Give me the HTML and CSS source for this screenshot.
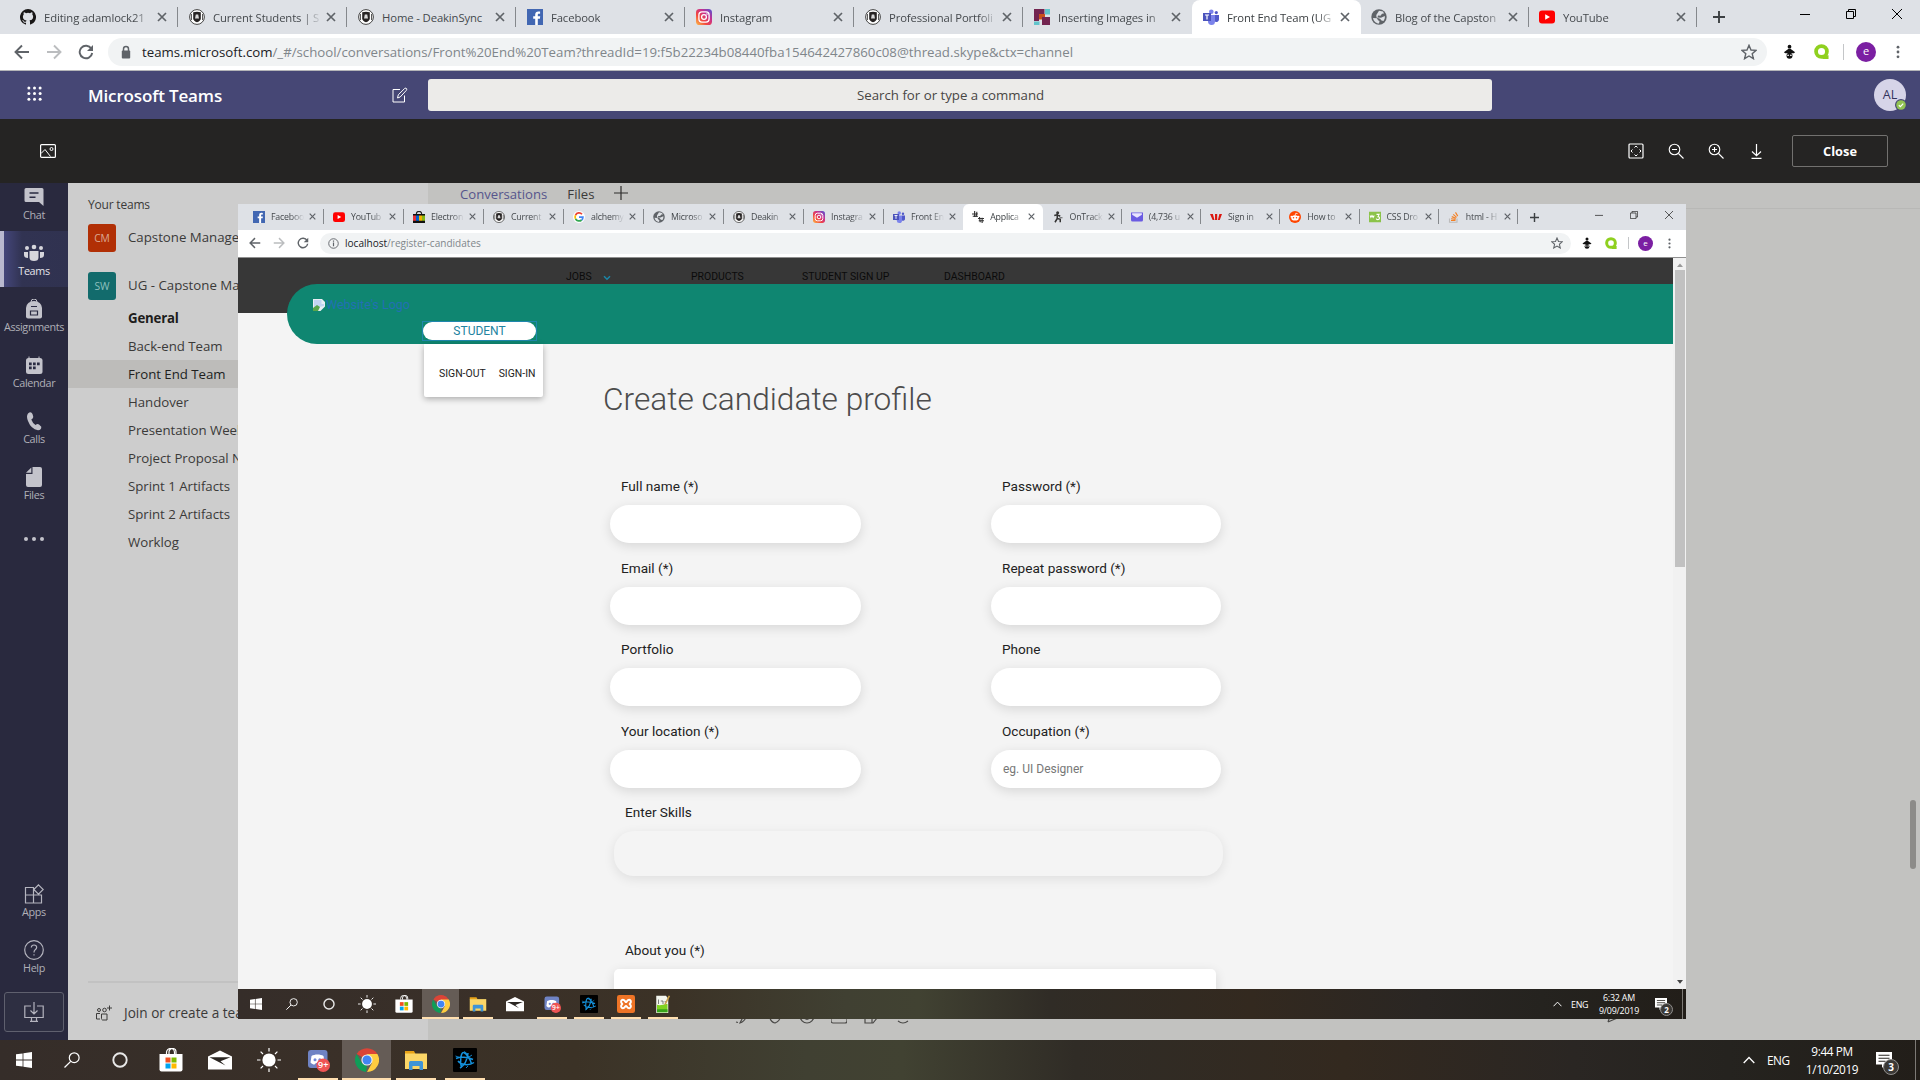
FILE: index.html
```html
<!DOCTYPE html>
<html lang="en">
<head>
<meta charset="utf-8">
<title>Front End Team | Microsoft Teams</title>
<link rel="stylesheet" href="styles.css">
</head>
<body>
<svg class="defs" width="0" height="0">
  <defs>
    <linearGradient id="ig-grad" x1="0" y1="1" x2="1" y2="0"><stop offset="0" stop-color="#fdc04a"/><stop offset=".35" stop-color="#f2463f"/><stop offset=".65" stop-color="#c7308f"/><stop offset="1" stop-color="#4b56d6"/></linearGradient>
    <symbol id="x" viewBox="0 0 10 10"><path d="M1 1l8 8M9 1L1 9" stroke="currentColor" stroke-width="1.7" fill="none"/></symbol>
    <symbol id="github" viewBox="0 0 16 16"><path fill="#191717" d="M8 0a8 8 0 0 0-2.53 15.59c.4.07.55-.17.55-.38v-1.5c-2.22.49-2.69-.94-2.69-.94-.36-.92-.89-1.17-.89-1.17-.73-.5.06-.49.06-.49.8.06 1.23.83 1.23.83.71 1.22 1.87.87 2.33.66.07-.52.28-.87.5-1.07-1.77-.2-3.64-.89-3.64-3.95 0-.87.31-1.59.83-2.15-.09-.2-.36-1.01.07-2.11 0 0 .68-.22 2.2.82a7.6 7.6 0 0 1 4 0c1.53-1.04 2.2-.82 2.2-.82.44 1.1.16 1.91.08 2.11.51.56.82 1.28.82 2.15 0 3.07-1.87 3.75-3.65 3.95.29.25.54.73.54 1.48v2.2c0 .21.15.46.55.38A8 8 0 0 0 8 0z"/></symbol>
    <symbol id="deakin" viewBox="0 0 16 16"><circle cx="8" cy="8" r="7.4" fill="#fff" stroke="#444" stroke-width="1"/><path d="M4.200 3.200q3.800-1 7.600 0v6.300c0 2-1.800 3-3.800 3.800-2-.8-3.800-1.800-3.800-3.800z" fill="#262323"/><path d="M6 9.500l.8-4h2.400l.8 4z" fill="#d8d8d8"/><path d="M2.400 5v6M13.600 5v6" stroke="#333" stroke-width=".9"/></symbol>
    <symbol id="fb" viewBox="0 0 16 16"><path fill="#4267b2" d="M0 0h16v16H0z"/><path fill="#fff" d="M8.200 16V9.800H6.200V7.300h2V5.600c0-2.100 1.300-3.200 3.200-3.200l1.700.1v2.200h-1.200c-.9 0-1.100.5-1.100 1.100v1.500h2.400l-.3 2.500h-2.100V16z"/></symbol>
    <symbol id="insta" viewBox="0 0 16 16"><rect width="16" height="16" rx="3.600" fill="url(#ig-grad)"/><g fill="none" stroke="#fff" stroke-width="1.300"><rect x="2.900" y="2.900" width="10.200" height="10.200" rx="3"/><circle cx="8" cy="8" r="2.400"/></g><circle cx="11" cy="5" r=".8" fill="#fff"/></symbol>
    <symbol id="blocks" viewBox="0 0 16 16"><path fill="#732450" d="M0 0h10.500v5H5v7H0z"/><path fill="#62c4cb" d="M11 0h5v5.500h-5zM0 12.500h5.500V16H0z"/><path fill="#c8501c" d="M5 5h6v5.500H5z"/><path fill="#732450" d="M8 8h8v8H8z"/></symbol>
    <symbol id="teamsico" viewBox="0 0 16 16"><circle cx="8.300" cy="2.700" r="2.300" fill="#7b83eb"/><circle cx="13.300" cy="3.600" r="1.600" fill="#5059c9"/><path fill="#7b83eb" d="M5 6h7v6.500A3.500 3.500 0 0 1 8.500 16 3.600 3.600 0 0 1 5 12.500z"/><path fill="#5059c9" d="M12 6h4v4.500a2.500 2.500 0 0 1-4 2z"/><path fill="#4b53bc" d="M0 4h8v8H0z"/><path d="M2 6h4M4 6v4.500" stroke="#fff" stroke-width="1.200"/></symbol>
    <symbol id="globe" viewBox="0 0 16 16"><circle cx="8" cy="8" r="7.700" fill="#5f6368"/><path fill="#dee1e6" d="M2 9l4 .3 1 2 1.500.7-.5 2.500C5 14.500 2.500 12 2 9zM8 1.700l4 .8 1 2-2 .3-1.500 2L7 6.500 6.500 8.500l3.500.3L13.800 7c.3 2-.3 3.500-1.300 5l-2-.5L9 9.800 5.500 8.500 5.300 6z"/></symbol>
    <symbol id="yt" viewBox="0 0 16 16"><rect y="1.500" width="16" height="13" rx="3" fill="#f00"/><path d="M6.200 5.200v5.600L11 8z" fill="#fff"/></symbol>
    <symbol id="ebag" viewBox="0 0 16 16"><path d="M4.500 5V3.500a3.500 3 0 0 1 7 0V5" fill="none" stroke="#222" stroke-width="1.500"/><path fill="#111" d="M0 4h16v12H0z"/><path fill="#e53238" d="M0 6h4v7H0z"/><path fill="#0064d2" d="M4 6h4v7H4z"/><path fill="#f5af02" d="M8 6h4v7H8z"/><path fill="#86b817" d="M12 6h4v7h-4z"/></symbol>
    <symbol id="google" viewBox="0 0 16 16"><circle cx="8" cy="8" r="8" fill="#fff"/><g fill="none" stroke-width="2.300"><path stroke="#ea4335" d="M12 4.300A5.200 5.200 0 0 0 3.400 5.600"/><path stroke="#fbbc05" d="M3.400 5.600a5.200 5.200 0 0 0 0 4.800"/><path stroke="#34a853" d="M3.400 10.400A5.200 5.200 0 0 0 11.500 12"/><path stroke="#4285f4" d="M11.500 12a5 5 0 0 0 1.700-3.700H8"/></g></symbol>
    <symbol id="apps4" viewBox="0 0 16 16"><g fill="none" stroke="#333" stroke-width="1.500"><path d="M0 4h8M3.500 0v8M6.500 1l-1 7M1 7h7M8 10h8M10 8l1 7M13.500 9v7M9 13h7"/></g></symbol>
    <symbol id="ontrack" viewBox="0 0 16 16"><g fill="none" stroke="#333" stroke-width="2"><path d="M7 4v6M3 6l4-1 4 2M7 10l4 1v4M7 10l-3 5"/></g><circle cx="7.500" cy="2.200" r="2" fill="#333"/><path d="M10 9h4" stroke="#333"/></symbol>
    <symbol id="ymail" viewBox="0 0 16 16"><path fill="#6a5be2" d="M0 2h16v10a2 2 0 0 1-2 2H2a2 2 0 0 1-2-2z"/><path fill="#e9e4ff" d="M1.500 3h13v2L8 9 1.500 5z"/></symbol>
    <symbol id="westpac" viewBox="0 0 16 16"><path fill="#da1710" d="M0 4h3.800l2.200 8H3.500zM6.700 4h2.900v8H6.700zM12.500 4H16l-3 8h-2.500z"/></symbol>
    <symbol id="reddit" viewBox="0 0 16 16"><circle cx="8" cy="8" r="8" fill="#ff4500"/><ellipse cx="8" cy="9.300" rx="5" ry="3.500" fill="#fff"/><circle cx="3.200" cy="7.500" r="1.200" fill="#fff"/><circle cx="12.800" cy="7.500" r="1.200" fill="#fff"/><path d="M8 6l1-3 2.500.5" stroke="#fff" fill="none"/><circle cx="6" cy="9" r="1" fill="#ff4500"/><circle cx="10" cy="9" r="1" fill="#ff4500"/></symbol>
    <symbol id="w3" viewBox="0 0 16 16"><path fill="#8bc34a" d="M0 1h16v14H0z"/><path d="M1.500 6l1 2.500L4 6l1.500 2.500L7 6M10 4.500h3.500L12 7.500c3 0 2.500 4-.3 4-1 0-2-.5-2-1.500" fill="none" stroke="#fff" stroke-width="1.400"/></symbol>
    <symbol id="so" viewBox="0 0 16 16"><path d="M2 10v5h10v-5" fill="none" stroke="#bcbbbb" stroke-width="1.500"/><path d="M4 12.700h6M4.100 10.300l6 .8M5 7.500l5.500 2.200M7 4.500l4.500 4M10 1.800l3 5" stroke="#f48024" stroke-width="1.500"/></symbol>
    <symbol id="back" viewBox="0 0 16 16"><path d="M15 8H2M8 1.500L1.500 8 8 14.500" fill="none" stroke="currentColor" stroke-width="1.900"/></symbol>
    <symbol id="fwd" viewBox="0 0 16 16"><path d="M1 8h13M8 1.500L14.500 8 8 14.500" fill="none" stroke="currentColor" stroke-width="1.900"/></symbol>
    <symbol id="reload" viewBox="0 0 16 16"><path d="M13.300 4.600A6.300 6.300 0 1 0 14.200 9" fill="none" stroke="currentColor" stroke-width="1.900"/><path d="M15 1v6H9z" fill="currentColor"/></symbol>
    <symbol id="star" viewBox="0 0 16 16"><path d="M8 1.300l2 4.700 5 .4-3.800 3.300 1.200 5L8 12l-4.400 2.700 1.200-5L1 6.400 6 6z" fill="none" stroke="#5f6368" stroke-width="1.400"/></symbol>
    <symbol id="bug" viewBox="0 0 16 16"><g fill="#111"><circle cx="8" cy="2.800" r="2"/><path d="M2 8.800L7 5h2l5 3.800-1.500 1H3.500z"/><circle cx="8" cy="12.600" r="3.200"/></g><circle cx="6.500" cy="12" r=".9" fill="#fff"/><circle cx="9.500" cy="12" r=".9" fill="#fff"/></symbol>
    <symbol id="q" viewBox="0 0 16 16"><circle cx="8" cy="8" r="5.800" fill="none" stroke="#8fd01f" stroke-width="4"/><path d="M9 12h6.500v4H9z" fill="#8fd01f"/></symbol>
    <symbol id="dots" viewBox="0 0 4 16"><g fill="#5f6368"><circle cx="2" cy="2.500" r="1.600"/><circle cx="2" cy="8" r="1.600"/><circle cx="2" cy="13.500" r="1.600"/></g></symbol>
    <symbol id="plus" viewBox="0 0 12 12"><path d="M6 0v12M0 6h12" stroke="currentColor" stroke-width="1.900"/></symbol>
    <symbol id="wmin" viewBox="0 0 10 10"><path d="M0 5.500h10" stroke="currentColor"/></symbol>
    <symbol id="wmax" viewBox="0 0 10 10"><path d="M.5 2.500h7v7h-7zM2.500 2.500v-2h7v7h-2" fill="none" stroke="currentColor"/></symbol>
    <symbol id="wx" viewBox="0 0 10 10"><path d="M0 0l10 10M10 0L0 10" stroke="currentColor"/></symbol>
    <symbol id="win" viewBox="0 0 16 16"><path fill="#fff" d="M0 2.300l6.600-.9v6.200H0zM7.400 1.300L16 0v7.600H7.400zM0 8.400h6.600v6.200L0 13.700zM7.400 8.400H16V16l-8.600-1.200z"/></symbol>
    <symbol id="search" viewBox="0 0 16 16"><circle cx="10.200" cy="5.700" r="4.900" fill="none" stroke="#fff" stroke-width="1.200"/><path d="M6.700 9.400L.5 15.500" stroke="#fff" stroke-width="1.300"/></symbol>
    <symbol id="cortana" viewBox="0 0 16 16"><circle cx="8" cy="8" r="6.700" fill="none" stroke="#e8e8e8" stroke-width="1.900"/></symbol>
    <symbol id="store" viewBox="0 0 24 24"><path d="M7.500 6V4.500a4 4 0 0 1 8 0V6M10 6V4a3.500 3.500 0 0 1 7 0v2" fill="none" stroke="#fff" stroke-width="1.200"/><path fill="#fff" d="M.5 6h23v15.500a2 2 0 0 1-2 2h-19a2 2 0 0 1-2-2z"/><path fill="#f25022" d="M6.500 9.500h5v5h-5z"/><path fill="#7fba00" d="M12.500 9.500h5v5h-5z"/><path fill="#00a4ef" d="M6.500 15.500h5v5h-5z"/><path fill="#ffb900" d="M12.500 15.500h5v5h-5z"/></symbol>
    <symbol id="mail" viewBox="0 0 24 20"><path fill="#fff" d="M0 6.500L12 .5l12 6V19.500H0z"/><path fill="#2b2622" d="M1.500 7.200L22.500 7.200 12.500 11.200 17.500 15.500z"/></symbol>
    <symbol id="sun" viewBox="0 0 24 24"><circle cx="12" cy="12" r="6.600" fill="#fff"/><path d="M12 0v3.500M12 20.500V24M0 12h3.500M20.500 12H24M3.600 3.600l2.400 2.400M18 18l2.400 2.400M3.600 20.400L6 18M18 6l2.400-2.400" stroke="#fff" stroke-width="1.200"/></symbol>
    <symbol id="discord" viewBox="0 0 24 24"><rect x="2" y="2" width="19.500" height="18" rx="3" fill="#6f83c4"/><path d="M5.500 8c3-2 9-2 12 0l1 6.500c-1.500 1.500-2.500 2-4 2L13 15h-3l-1.500 1.500c-1.500 0-2.500-.5-4-2z" fill="#fff"/><circle cx="9" cy="11.800" r="1.500" fill="#7289da"/><circle cx="13.800" cy="11.800" r="1.500" fill="#7289da"/><circle cx="17.200" cy="17.200" r="6.800" fill="#ee5454"/><text x="17.200" y="20.300" text-anchor="middle" font-size="9" font-weight="600" fill="#fff">9+</text></symbol>
    <symbol id="chrome" viewBox="0 0 24 24"><path fill="#db4437" d="M12 12L1.700 6A12 12 0 0 1 22.300 6z"/><path fill="#ffcd40" d="M12 6h10.400A12 12 0 0 1 12 24l5-9z"/><path fill="#0f9d58" d="M1.600 6l5.200 9L12 18l-1 6A12 12 0 0 1 1.600 6z"/><circle cx="12" cy="12" r="5.600" fill="#f1f1f1"/><circle cx="12" cy="12" r="4.500" fill="#4285f4"/></symbol>
    <symbol id="explorer" viewBox="0 0 24 20"><path fill="#e8a317" d="M1 1h9l1.500 3H1z"/><path fill="#fbd667" d="M1 3.500h22V19H1z"/><path fill="#3f94d6" d="M5 12.500a1.500 1.500 0 0 1 1.500-1.500h11a1.500 1.500 0 0 1 1.500 1.500V20h-3.500v-4h-7v4H5z"/></symbol>
    <symbol id="bnet" viewBox="0 0 24 24"><rect width="24" height="24" rx="1" fill="#000"/><g fill="none" stroke="#1491dc" stroke-width="1.500"><path d="M8.500 20C6.500 14 8 4 10.500 4.500c3 .5 7 7 8 11.500M5 13c3 4 11 5 16 1.500M3 10.500c4-2 12-1.500 17 1M15 5c-.5 5-3 12-8 15"/><path d="M11 3.500q3 1 4 4M2.500 8l4 1.500M13 20l2-2M16 9l3-2" stroke-width=".9"/></g></symbol>
    <symbol id="xampp" viewBox="0 0 24 24"><rect x="0" y="0" width="24" height="24" rx="3" fill="#ee7426"/><path d="M7 6.500c3-1 4 3 5 3s2-4 5-3c3 2 1 4 0 5.500 1 1.500 3 3.500 0 5.500-3 1-4-3-5-3s-2 4-5 3c-3-2-1-4 0-5.500-1-1.500-3-3.500 0-5.500z" fill="none" stroke="#fff" stroke-width="2.600"/></symbol>
    <symbol id="npp" viewBox="0 0 24 24"><path fill="#f3f6ef" d="M3 1h13l3 4v19H3z"/><path fill="#7ed321" d="M4 13c6 2 9-2 14-1v11H4z"/><path fill="#37a41a" d="M4 19h14v4H4z"/><path d="M6 6v6M9 8h3v4M14 9h2" stroke="#555" stroke-width="1" fill="none"/><path d="M20.500 1l-6 12" stroke="#c9a14a" stroke-width="2.200"/></symbol>
    <symbol id="chev" viewBox="0 0 12 8"><path d="M.7 7L6 1.500 11.300 7" fill="none" stroke="#fff" stroke-width="1.300"/></symbol>
    <symbol id="note" viewBox="0 0 16 16"><path fill="#fff" d="M0 0h16v12.500H9L6 16v-3.500H0z"/><path d="M2.500 3.300h11M2.500 6.300h11M2.500 9.300h7" stroke="#2a2723" stroke-width="1.100"/></symbol>
  </defs>
</svg>

<div class="screen">
  <div class="tabstrip">
    <div class="tab"><svg class="fav"><use href="#github"/></svg><span class="tt">Editing adamlock21</span><svg class="tx"><use href="#x"/></svg></div>
    <div class="tab"><svg class="fav"><use href="#deakin"/></svg><span class="tt">Current Students | S</span><svg class="tx"><use href="#x"/></svg></div>
    <div class="tab"><svg class="fav"><use href="#deakin"/></svg><span class="tt plain">Home - DeakinSync</span><svg class="tx"><use href="#x"/></svg></div>
    <div class="tab"><svg class="fav"><use href="#fb"/></svg><span class="tt">Facebook</span><svg class="tx"><use href="#x"/></svg></div>
    <div class="tab"><svg class="fav"><use href="#insta"/></svg><span class="tt">Instagram</span><svg class="tx"><use href="#x"/></svg></div>
    <div class="tab"><svg class="fav"><use href="#deakin"/></svg><span class="tt">Professional Portfoli</span><svg class="tx"><use href="#x"/></svg></div>
    <div class="tab nosep"><svg class="fav"><use href="#blocks"/></svg><span class="tt">Inserting Images in</span><svg class="tx"><use href="#x"/></svg></div>
    <div class="tab active nosep"><svg class="fav"><use href="#teamsico"/></svg><span class="tt">Front End Team (UG</span><svg class="tx"><use href="#x"/></svg></div>
    <div class="tab n"><svg class="fav"><use href="#globe"/></svg><span class="tt">Blog of the Capston</span><svg class="tx"><use href="#x"/></svg></div>
    <div class="tab n"><svg class="fav"><use href="#yt"/></svg><span class="tt">YouTube</span><svg class="tx"><use href="#x"/></svg></div>
    <svg class="newtab"><use href="#plus"/></svg>
    <div class="winctl"><svg><use href="#wmin"/></svg><svg><use href="#wmax"/></svg><svg><use href="#wx"/></svg></div>
  </div>
  <div class="toolbar">
    <svg class="nav"><use href="#back"/></svg><svg class="nav off"><use href="#fwd"/></svg><svg class="nav"><use href="#reload"/></svg>
    <div class="omni">
      <svg class="lock" viewBox="0 0 10 14"><path d="M2.500 6V4a2.500 2.500 0 0 1 5 0v2" fill="none" stroke="#5f6368" stroke-width="1.500"/><rect x=".8" y="5.500" width="8.400" height="8" rx="1" fill="#5f6368"/></svg>
      <span class="url"><b>teams.microsoft.com</b>/_#/school/conversations/Front%20End%20Team?threadId=19:f5b22234b08440fba154642427860c08@thread.skype&amp;ctx=channel</span>
      <svg class="star"><use href="#star"/></svg>
    </div>
    <div class="ext"><svg><use href="#bug"/></svg><svg class="q"><use href="#q"/></svg><i></i><span class="prof">e</span><svg class="kebab"><use href="#dots"/></svg></div>
  </div>

  <div class="teamsbar">
    <svg class="waffle" viewBox="0 0 16 16" fill="#fff"><circle cx="2" cy="2" r="1.600"/><circle cx="8" cy="2" r="1.600"/><circle cx="14" cy="2" r="1.600"/><circle cx="2" cy="8" r="1.600"/><circle cx="8" cy="8" r="1.600"/><circle cx="14" cy="8" r="1.600"/><circle cx="2" cy="14" r="1.600"/><circle cx="8" cy="14" r="1.600"/><circle cx="14" cy="14" r="1.600"/></svg>
    <span class="brand">Microsoft Teams</span>
    <svg class="compose" viewBox="0 0 16 16" fill="none" stroke="#fff"><path d="M8 2.500H1v12.500h11.500V8.500M5.500 11l.8-3.200 6.500-6.500q1.300-.6 2 .6 0 1-.5 1.500L8.200 10z"/></svg>
    <div class="tsearch">Search for or type a command</div>
    <div class="avatar">AL<svg viewBox="0 0 12 12"><circle cx="6" cy="6" r="6" fill="#464775"/><circle cx="6" cy="6" r="4.800" fill="#92c353"/><path d="M3.800 6.200l1.600 1.500 2.800-3" stroke="#fff" fill="none" stroke-width="1.200"/></svg></div>
  </div>

  <div class="viewerbar">
    <svg class="pic" viewBox="0 0 16 14" fill="none" stroke="#fff"><rect x=".6" y=".6" width="14.800" height="12.800" rx="1" stroke-width="1.200"/><path d="M1 9.500l4-4 5.500 7"/><circle cx="11.500" cy="5" r="1.500"/></svg>
    <div class="vtools">
      <svg viewBox="0 0 16 16" fill="none" stroke="#fff"><rect x="1" y="1" width="14" height="14" rx="1" stroke-width="1.200"/><path d="M6.500 4.500L8 3l1.500 1.500M6.500 11.500L8 13l1.500-1.500M4.500 6.500L3 8l1.500 1.500M11.500 6.500L13 8l-1.500 1.500"/></svg>
      <svg viewBox="0 0 16 16" fill="none" stroke="#fff" stroke-width="1.100"><circle cx="6.500" cy="6.500" r="5.300"/><path d="M10.500 10.500l5 5M4 6.500h5"/></svg>
      <svg viewBox="0 0 16 16" fill="none" stroke="#fff" stroke-width="1.100"><circle cx="6.500" cy="6.500" r="5.300"/><path d="M10.500 10.500l5 5M4 6.500h5M6.500 4v5"/></svg>
      <svg viewBox="0 0 16 16" fill="none" stroke="#fff" stroke-width="1.200"><path d="M8.500 1v11.500M4 8.500l4.500 4.200L13 8.500M3.500 15.400h10"/></svg>
      <button class="close">Close</button>
    </div>
  </div>

  <div class="body">
    <div class="rail">
      <div class="ritem"><svg viewBox="0 0 20 20" fill="#c3c3cb"><path d="M2 1h16a1.500 1.500 0 0 1 1.500 1.500V19L15 15H2A1.500 1.500 0 0 1 .5 13.500v-11A1.500 1.500 0 0 1 2 1z"/><path d="M5.500 6h9M5.500 10.300h6" stroke="#2a2b42" stroke-width="1.400"/></svg>Chat</div>
      <div class="ritem on"><svg viewBox="0 0 20 20" fill="#d6d6dc"><circle cx="10" cy="4" r="2.300"/><circle cx="3" cy="5" r="2"/><circle cx="17" cy="5" r="2"/><path d="M5.500 8h9v6.500a4.500 3.500 0 0 1-9 0zM0 9h4v6Q0 15 0 12zM16 9h4v3q0 3-4 3z"/></svg>Teams</div>
      <div class="ritem"><svg viewBox="0 0 20 20" fill="#c3c3cb"><path d="M7 3a3 3 0 0 1 6 0" fill="none" stroke="#c3c3cb"/><path d="M2 9a8 7 0 0 1 16 0v8.500a2 2 0 0 1-2 2H4a2 2 0 0 1-2-2z"/><path d="M7 7.500h6M6.500 12h7v4h-7z" fill="none" stroke="#2a2b42" stroke-width="1.200"/></svg>Assignments</div>
      <div class="ritem"><svg viewBox="0 0 20 20" fill="#c3c3cb"><path d="M5 1.500v3M15 1.500v3" stroke="#c3c3cb"/><rect x="2" y="3" width="16.500" height="16" rx="2.500"/><path fill="#2a2b42" d="M5 7.500h2.700v2.700H5zM9 7.500h2.700v2.700H9zM13 7.500h2.700v2.700H13zM5 11.500h2.700v2.700H5zM9 11.500h2.700v2.700H9z"/></svg>Calendar</div>
      <div class="ritem"><svg viewBox="0 0 20 20" fill="#c3c3cb"><path d="M4 2.500Q7 0 8.500 3l.8 3Q9 7.500 7.300 8.500 8.500 12 11.500 14q2-1.500 3.500-.5l2.300 2.200Q17.500 19 14 19.300 7 18 4 10 2 5 4 2.500z"/></svg>Calls</div>
      <div class="ritem"><svg viewBox="0 0 20 20" fill="#c3c3cb"><path d="M8.500 0H16a2 2 0 0 1 2 2v16a2 2 0 0 1-2 2H4a2 2 0 0 1-2-2V7h6.500z"/><path d="M7.300.5v5.300H2z"/></svg>Files</div>
      <svg class="more" viewBox="0 0 20 4" fill="#c3c3cb"><circle cx="2" cy="2" r="2"/><circle cx="10" cy="2" r="2"/><circle cx="18" cy="2" r="2"/></svg>
      <div class="rbottom">
        <div class="ritem"><svg viewBox="0 0 20 20" fill="none" stroke="#b4b4be" stroke-width="1.200"><path d="M10 3.500H1.500v15.500h16V10.500M1.500 11h16M9.500 3.500V19M14.500.8L19.200 5.500 14.500 10.200 9.800 5.500z"/></svg>Apps</div>
        <div class="ritem"><svg viewBox="0 0 20 20" fill="none" stroke="#b4b4be" stroke-width="1.200"><circle cx="10" cy="10" r="9.300"/><path d="M7.300 7.500Q7.500 5 10 5t2.700 2.300Q12.700 8.700 11 9.900 10 10.800 10 12.500M10 14.300v1.300"/></svg>Help</div>
        <div class="dlbox"><svg viewBox="0 0 20 20" fill="none" stroke="#b4b4be" stroke-width="1.200"><path d="M7 4H.8v11.500h18.400V4H13M10 0v11.500M6.500 8.500L10 12l3.500-3.500M7.500 15.500V19M12.500 15.500V19M6 19.300h8"/></svg></div>
      </div>
    </div>

    <div class="teams">
      <div class="th">Your teams</div>
      <div class="team"><span class="tile cm">CM</span>Capstone Management</div>
      <div class="team"><span class="tile sw">SW</span>UG - Capstone Management</div>
      <div class="ch bold">General</div>
      <div class="ch">Back-end Team</div>
      <div class="ch sel">Front End Team</div>
      <div class="ch">Handover</div>
      <div class="ch">Presentation Week</div>
      <div class="ch">Project Proposal Notes</div>
      <div class="ch">Sprint 1 Artifacts</div>
      <div class="ch">Sprint 2 Artifacts</div>
      <div class="ch">Worklog</div>
      <div class="join"><svg viewBox="0 0 16 16" fill="none" stroke="#3d3c3b"><circle cx="3" cy="5" r="1.500"/><circle cx="8.500" cy="5" r="1.800"/><path d="M4 8.500H.5v5.500H4M5.500 9h5.500v6H6.500q-1-.5-1-1.500zM13.500.5v5M11 3h5"/></svg>Join or create a team</div>
    </div>

    <div class="main">
      <div class="mtabs"><span class="cur">Conversations</span><span>Files</span><svg viewBox="0 0 14 14"><path d="M7 0v14M0 7h14" stroke="#2d2c2b" stroke-width="1.200"/></svg></div>
      <div class="composer">
        <svg viewBox="0 0 16 16"><path d="M1 14l2 .5M5 15q5-1 9-12L8 9z"/></svg><svg viewBox="0 0 16 16"><path d="M3 5v5q1 4 5 5 5-2 5-6V4"/></svg><svg viewBox="0 0 16 16"><circle cx="8" cy="8" r="7"/><path d="M4 9q4 5 8 0z"/></svg><svg viewBox="0 0 16 16"><rect x="0" y="3" width="16" height="12" rx="2"/></svg><svg viewBox="0 0 16 16"><path d="M2 3v12h8l4-5V3M9 15v-5h5"/></svg><svg viewBox="0 0 16 16"><path d="M0 9h16M3 13q5 4 10 0"/></svg>
        <svg class="send" viewBox="0 0 16 16"><path d="M1 14L15 8M1 14L3 8"/></svg>
      </div>
      <div class="mscroll"></div>
    </div>
  </div>

  <div class="taskbar">
    <div class="tk"><svg><use href="#win"/></svg></div>
    <div class="tk"><svg><use href="#search"/></svg></div>
    <div class="tk c"><svg><use href="#cortana"/></svg></div>
    <div class="tk w big"><svg><use href="#store"/></svg></div>
    <div class="tk w big"><svg><use href="#mail"/></svg></div>
    <div class="tk w big"><svg><use href="#sun"/></svg></div>
    <div class="tk w big run"><svg><use href="#discord"/></svg></div>
    <div class="tk w big run hot"><svg><use href="#chrome"/></svg></div>
    <div class="tk w big run"><svg><use href="#explorer"/></svg></div>
    <div class="tk w big run"><svg><use href="#bnet"/></svg></div>
    <div class="tray"><svg class="chev"><use href="#chev"/></svg><span class="eng">ENG</span><span class="clock">9:44 PM<br>1/10/2019</span><span class="notes"><svg><use href="#note"/></svg><em>3</em></span></div>
  </div>

  <div class="shot">
    <div class="tabstrip">
      <div class="tab"><svg class="fav"><use href="#fb"/></svg><span class="tt">Faceboo</span><svg class="tx"><use href="#x"/></svg></div>
      <div class="tab"><svg class="fav"><use href="#yt"/></svg><span class="tt">YouTub</span><svg class="tx"><use href="#x"/></svg></div>
      <div class="tab"><svg class="fav"><use href="#ebag"/></svg><span class="tt">Electron</span><svg class="tx"><use href="#x"/></svg></div>
      <div class="tab"><svg class="fav"><use href="#deakin"/></svg><span class="tt">Current</span><svg class="tx"><use href="#x"/></svg></div>
      <div class="tab"><svg class="fav"><use href="#google"/></svg><span class="tt">alchemy</span><svg class="tx"><use href="#x"/></svg></div>
      <div class="tab"><svg class="fav"><use href="#globe"/></svg><span class="tt">Microso</span><svg class="tx"><use href="#x"/></svg></div>
      <div class="tab"><svg class="fav"><use href="#deakin"/></svg><span class="tt">Deakin</span><svg class="tx"><use href="#x"/></svg></div>
      <div class="tab"><svg class="fav"><use href="#insta"/></svg><span class="tt">Instagra</span><svg class="tx"><use href="#x"/></svg></div>
      <div class="tab s nosep"><svg class="fav"><use href="#teamsico"/></svg><span class="tt">Front En</span><svg class="tx"><use href="#x"/></svg></div>
      <div class="tab s active nosep"><svg class="fav"><use href="#apps4"/></svg><span class="tt">Applica</span><svg class="tx"><use href="#x"/></svg></div>
      <div class="tab s"><svg class="fav"><use href="#ontrack"/></svg><span class="tt">OnTrack</span><svg class="tx"><use href="#x"/></svg></div>
      <div class="tab s"><svg class="fav"><use href="#ymail"/></svg><span class="tt">(4,736 u</span><svg class="tx"><use href="#x"/></svg></div>
      <div class="tab s"><svg class="fav"><use href="#westpac"/></svg><span class="tt">Sign in</span><svg class="tx"><use href="#x"/></svg></div>
      <div class="tab s"><svg class="fav"><use href="#reddit"/></svg><span class="tt">How to</span><svg class="tx"><use href="#x"/></svg></div>
      <div class="tab s"><svg class="fav"><use href="#w3"/></svg><span class="tt">CSS Dro</span><svg class="tx"><use href="#x"/></svg></div>
      <div class="tab s"><svg class="fav"><use href="#so"/></svg><span class="tt">html - H</span><svg class="tx"><use href="#x"/></svg></div>
      <svg class="newtab"><use href="#plus"/></svg>
      <div class="winctl"><svg><use href="#wmin"/></svg><svg><use href="#wmax"/></svg><svg><use href="#wx"/></svg></div>
    </div>
    <div class="toolbar">
      <svg class="nav"><use href="#back"/></svg><svg class="nav off"><use href="#fwd"/></svg><svg class="nav"><use href="#reload"/></svg>
      <div class="omni">
        <svg class="lock" viewBox="0 0 12 12"><circle cx="6" cy="6" r="5.200" fill="none" stroke="#5f6368"/><path d="M6 5v4M6 2.800v1.300" stroke="#5f6368" stroke-width="1.300"/></svg>
        <span class="url"><b>localhost</b>/register-candidates</span>
        <svg class="star"><use href="#star"/></svg>
      </div>
      <div class="ext"><svg><use href="#bug"/></svg><svg class="q"><use href="#q"/></svg><i></i><span class="prof">e</span><svg class="kebab"><use href="#dots"/></svg></div>
    </div>

    <div class="view">
      <div class="page">
        <div class="sitenav"><span class="jobs">JOBS</span><svg viewBox="0 0 8 6"><path d="M1 1.300L4 4.300 7 1.300" stroke="#1b86a8" stroke-width="1.500" fill="none"/></svg><span class="prod">PRODUCTS</span><span class="sign">STUDENT SIGN UP</span><span>DASHBOARD</span></div>
        <div class="hero">
          <svg class="broken" viewBox="0 0 12 12"><path d="M0 0h9l3 3v9H0z" fill="#e9eef5"/><path d="M1 1h7.500v4L11 5v2L1 9z" fill="#c2d5f2"/><path d="M0 12V9l4-3 3 2-2 4z" fill="#57a64a"/><path d="M12 7.500L7.500 12H12z" fill="#0f8671"/></svg><span class="logo">Website's Logo</span>
        </div>
        <div class="drop"><div class="pillbox"><div class="pill">STUDENT</div></div><div class="menu"><span>SIGN-OUT</span><span>SIGN-IN</span></div></div>
        <div class="form">
          <h1>Create candidate profile</h1>
          <div class="grid">
            <label>Full name (*)<i></i></label><label>Password (*)<i></i></label>
            <label>Email (*)<i></i></label><label>Repeat password (*)<i></i></label>
            <label>Portfolio<i></i></label><label>Phone<i></i></label>
            <label>Your location (*)<i></i></label><label>Occupation (*)<i>eg. UI Designer</i></label>
          </div>
          <label class="wide">Enter Skills<i class="skills"></i></label>
          <label class="wide about">About you (*)<i class="area"></i></label>
        </div>
      </div>
      <div class="sbar"><svg viewBox="0 0 6 4"><path d="M0 4l3-3.500L6 4z" fill="#999"/></svg><div class="thumb"></div><svg class="dn" viewBox="0 0 6 4"><path d="M0 0h6L3 3.800z" fill="#444"/></svg></div>
    </div>

    <div class="taskbar">
      <div class="tk"><svg><use href="#win"/></svg></div>
      <div class="tk"><svg><use href="#search"/></svg></div>
      <div class="tk c"><svg><use href="#cortana"/></svg></div>
      <div class="tk w big"><svg><use href="#sun"/></svg></div>
      <div class="tk w big"><svg><use href="#store"/></svg></div>
      <div class="tk w big run hot"><svg><use href="#chrome"/></svg></div>
      <div class="tk w big run"><svg><use href="#explorer"/></svg></div>
      <div class="tk w big"><svg><use href="#mail"/></svg></div>
      <div class="tk w big run"><svg><use href="#discord"/></svg></div>
      <div class="tk w big run"><svg><use href="#bnet"/></svg></div>
      <div class="tk w big run"><svg><use href="#xampp"/></svg></div>
      <div class="tk w big run"><svg><use href="#npp"/></svg></div>
      <div class="tray"><svg class="chev"><use href="#chev"/></svg><span class="eng">ENG</span><span class="clock">6:32 AM<br>9/09/2019</span><span class="notes"><svg><use href="#note"/></svg><em>2</em></span></div>
    </div>
  </div>
</div>
</body>
</html>
```
FILE: styles.css
```css
* { box-sizing: border-box; }
body { margin: 0; overflow: hidden; font-family: "Open Sans", "Noto Sans", sans-serif; }
.defs { position: absolute; }
svg { flex: none; display: block; }
.screen { position: relative; width: 1920px; height: 1080px; display: flex; flex-direction: column; overflow: hidden; }

/* browser chrome */
.tabstrip { display: flex; height: 34px; padding-left: 9px; background: #dee1e6; flex: none; }
.tab { width: 169px; display: flex; align-items: center; padding-left: 11px; color: #45494d; font-size: 11.300px; position: relative; flex: none; }
.tab.n { width: 168px; padding-left: 10px; }
.tab::after { content: ""; width: 1px; height: 20px; background: #85888c; position: absolute; right: 0; }
.tab.nosep::after { display: none; }
.tab.active { background: #fff; border-radius: 8px 8px 0 0; color: #3c4043; }
.fav { width: 16px; height: 16px; }
.tt { width: 112px; margin-left: 8px; margin-right: 1px; letter-spacing: -.12px; white-space: nowrap; -webkit-mask-image: linear-gradient(90deg, #000 80%, transparent 97%); mask-image: linear-gradient(90deg, #000 80%, transparent 97%); }
.tt.plain { -webkit-mask-image: none; mask-image: none; }
.tx { width: 10px; height: 10px; color: #5f6368; }
.newtab { width: 12px; height: 12px; margin: 11px 0 0 16px; color: #3c4043; }
.winctl { display: flex; gap: 36px; margin: 9px 18px 0 auto; color: #000; }
.winctl svg { width: 10px; height: 10px; }
.toolbar { height: 37px; display: flex; align-items: center; padding: 0 20px 1px 14px; background: #fff; border-bottom: 1px solid #b4b5b8; flex: none; }
.nav { width: 16px; height: 16px; margin-right: 16px; color: #5f6368; }
.nav.off { color: #bbbdbf; }
.omni { width: 1659px; height: 28px; display: flex; align-items: center; border-radius: 14px; background: #f1f3f4; margin-left: -2px; padding: 0 10px 0 13px; }
.lock { width: 10px; height: 14px; }
.url { margin-left: 11px; font-size: 13.260px; color: #80868b; white-space: nowrap; }
.url b { font-weight: 400; color: #202124; }
.star { width: 16px; height: 16px; margin-left: auto; }
.ext { display: flex; align-items: center; margin-left: auto; }
.ext svg { width: 15px; height: 15px; }
.ext .q { margin-left: 17px; }
.ext i { width: 1px; height: 16px; background: #c4c6c8; margin: 0 12px 0 14px; }
.prof { width: 20px; height: 20px; border-radius: 50%; background: #7b1fa2; color: #fff; font-size: 11px; line-height: 18px; text-align: center; }
.ext .kebab { width: 4px; height: 14px; margin-left: 20px; }

/* Teams top bars */
.teamsbar { height: 48px; flex: none; background: #464775; display: flex; align-items: center; padding: 0 14px 0 27px; }
.waffle { width: 15px; height: 15px; margin-bottom: 3px; }
.brand { width: 302px; margin-left: 46px; font-weight: 600; font-size: 17px; letter-spacing: -.15px; color: #fff; white-space: nowrap; }
.compose { width: 16px; height: 16px; margin-left: 2px; }
.tsearch { width: 1064px; height: 32px; margin-left: 20px; padding-left: 429px; line-height: 32px; border-radius: 3px; background: #ecebe9; color: #484644; font-size: 13.250px; }
.avatar { width: 32px; height: 32px; border-radius: 50%; background: #d6d4e8; color: #33335c; margin-left: auto; font-size: 12.500px; line-height: 32px; text-align: center; position: relative; }
.avatar svg { position: absolute; right: -1px; bottom: 0; width: 12px; height: 12px; }
.viewerbar { height: 64px; flex: none; background: #252423; display: flex; align-items: center; padding: 0 32px 0 40px; }
.pic { width: 16px; height: 14px; }
.vtools { display: flex; align-items: center; gap: 24px; margin-left: auto; }
.vtools svg { width: 16px; height: 16px; }
.close { width: 96px; height: 32px; margin-left: 4px; background: none; border: 1px solid #72716f; border-radius: 2px; color: #fff; font: 700 12.800px "Open Sans", sans-serif; }

/* Teams body */
.body { display: flex; height: 857px; flex: none; overflow: hidden; }
.rail { width: 68px; background: #29293e; display: flex; flex-direction: column; align-items: center; color: #b0b0b8; }
.ritem { width: 68px; height: 56px; flex: none; display: flex; flex-direction: column; align-items: center; padding-top: 12px; font-size: 10.800px; line-height: 16px; letter-spacing: -.35px; }
.ritem:first-child { margin-top: -8px; }
.ritem svg { width: 20px; height: 20px; }
.ritem.on { background: linear-gradient(90deg, #b9b9cf 4px, #44467a 4px, #313352 22px, #303250); color: #e4e4ea; }
.more { width: 20px; height: 4px; margin-top: 26px; }
.rbottom { margin-top: auto; display: flex; flex-direction: column; align-items: center; }
.rbottom .ritem { padding-top: 13px; }
.rbottom .ritem:first-child { margin-top: 0; }
.dlbox { width: 60px; height: 40px; border: 1px solid #5f606e; border-radius: 3px; background: #2e2f42; margin: 9px 0 8px; display: grid; place-items: center; }
.dlbox svg { width: 20px; height: 20px; }
.teams { width: 360px; background: #cdcdcd; color: #3b3a39; font-size: 13.250px; display: flex; flex-direction: column; }
.th { padding-left: 20px; font-size: 12px; letter-spacing: -.2px; height: 37px; padding-top: 14px; line-height: 16px; }
.team { height: 48px; padding: 4px 0 0 20px; display: flex; align-items: flex-start; line-height: 27px; white-space: nowrap; }
.tile { width: 28px; height: 28px; margin-right: 12px; border-radius: 3px; color: #dba893; font-size: 10.300px; text-align: center; line-height: 28px; }
.cm { background: #b12f05; }
.sw { background: #126b6c; color: #8fc0be; }
.ch { height: 28px; padding-left: 60px; line-height: 28px; letter-spacing: -.03px; white-space: nowrap; flex: none; }
.team + .ch { margin-top: -12px; }
.bold { font-weight: 700; color: #1e1d1c; letter-spacing: -.2px; }
.sel { background: #bdbcba; color: #201f1e; }
.join { margin: auto 0 0 20px; height: 59px; border-top: 2px solid #c2c2c2; padding: 2px 0 0 8px; display: flex; align-items: center; gap: 12px; font-size: 13.600px; white-space: nowrap; }
.join svg { width: 16px; height: 16px; }
.main { flex: 1; background: #c2c2c0; position: relative; display: flex; flex-direction: column; }
.mtabs { height: 26px; display: flex; align-items: center; padding: 0 0 4px 32px; gap: 20px; font-size: 13.150px; color: #3b3a39; border-bottom: 1px solid #b8b8b6; }
.mtabs .cur { color: #56558c; }
.mtabs svg { width: 14px; height: 14px; margin-bottom: 2px; }
.composer { margin-top: auto; height: 32px; display: flex; gap: 16px; padding-left: 307px; }
.composer svg { width: 16px; height: 16px; fill: none; stroke: #4a4947; stroke-width: 1.200; }
.composer .send { margin-left: 680px; }
.mscroll { position: absolute; right: 4px; top: 617px; width: 6px; height: 69px; border-radius: 3px; background: #8c8b89; }

/* Windows taskbar */
.taskbar { height: 40px; flex: none; display: flex; background: linear-gradient(90deg, #352d29 0, #3a3028 18%, #3b3226 30%, #404032 42%, #414232 47%, #302c26 56%, #33291f 70%, #2a2623 82%, #25231f 90%, #221e19 100%); color: #fff; }
.tk { width: 48px; display: grid; place-items: center; border-bottom: 2px solid transparent; flex: none; padding-top: 2px; }
.tk.w { width: 49px; }
.tk.c { width: 50px; padding-right: 2px; }
.tk svg { width: 16px; height: 16px; }
.tk.big svg { width: 24px; height: 24px; }
.tk.run { border-bottom: 0; background: linear-gradient(#ffdfb0, #ffdfb0) center bottom / 40px 2px no-repeat; padding: 0; }
.tk.hot { background: linear-gradient(#ffdfb0, #ffdfb0) center bottom / 100% 2px no-repeat, #655c56; }
.tray { margin-left: auto; display: flex; align-items: center; padding-right: 25px; font-size: 11.800px; position: relative; }
.tray::after { content: ""; position: absolute; right: 4px; top: 0; bottom: 0; width: 1px; background: #7d7a76; }
.chev { width: 12px; height: 8px; }
.eng { margin-left: 12px; width: 36px; letter-spacing: -.5px; }
.clock { width: 58px; text-align: center; line-height: 18px; letter-spacing: -.4px; white-space: nowrap; }
.notes { margin-left: 15px; margin-right: 3px; position: relative; width: 16px; height: 16px; }
.notes svg { width: 16px; height: 16px; }
.notes em { position: absolute; left: 7px; top: 7px; width: 16px; height: 16px; border-radius: 50%; background: #3b3936; border: 1px solid #918f8d; font: 700 10px/14px "Open Sans", sans-serif; text-align: center; }

/* opened attachment */
.shot { position: absolute; left: 238px; top: 204px; width: 1448px; height: 815px; display: flex; flex-direction: column; background: #f4f4f4; overflow: hidden; }
.shot .tabstrip { height: 26px; padding-left: 6px; }
.shot .tab { width: 80px; padding: 0 0 1px 9px; font-size: 8.800px; }
.shot .tab.s { width: 79.250px; }
.shot .tab::after { height: 15px; }
.shot .tab.active { border-radius: 6px 6px 0 0; }
.shot .fav { width: 12px; height: 12px; }
.shot .tt { width: 37px; margin: 0 1px 0 6px; letter-spacing: -.2px; -webkit-mask-image: linear-gradient(90deg, #000 55%, transparent 90%); mask-image: linear-gradient(90deg, #000 55%, transparent 90%); }
.shot .tx { width: 7px; height: 7px; }
.shot .newtab { width: 9px; height: 9px; margin: 8.500px 0 0 12px; }
.shot .winctl { gap: 27px; margin: 7px 13px 0 auto; color: #333; }
.shot .winctl svg { width: 8px; height: 8px; }
.shot .toolbar { height: 28px; padding: 0 15px 1px 11px; border-bottom: 1px solid #8f8f8f; }
.shot .nav { width: 12px; height: 12px; margin-right: 12px; }
.shot .omni { width: 1251px; height: 21px; border-radius: 11px; padding: 0 8px 0 8px; margin-left: -1px; }
.shot .lock { width: 11px; height: 11px; }
.shot .url { margin-left: 6px; font-size: 10.050px; }
.shot .star { width: 12px; height: 12px; }
.shot .ext svg { width: 12px; height: 12px; }
.shot .ext .q { margin-left: 12px; }
.shot .ext i { height: 12px; margin: 0 9px 0 11px; }
.shot .prof { width: 15px; height: 15px; font-size: 8px; line-height: 14px; }
.shot .ext .kebab { width: 3px; height: 11px; margin-left: 15px; }
.view { flex: 1; display: flex; min-height: 0; overflow: hidden; }
.page { width: 1435px; height: 731px; position: relative; font-family: Roboto, sans-serif; overflow: hidden; background: #f4f4f4; }
.sitenav { height: 55px; background: #373737; color: #0b0b0b; font-size: 10.450px; line-height: 14px; padding: 12px 0 0 328px; display: flex; white-space: nowrap; }
.sitenav .jobs { width: 37px; }
.sitenav svg { width: 8px; height: 6px; margin: 5px 80px 0 0; }
.sitenav .prod { width: 111px; }
.sitenav .sign { width: 142px; }
.hero { position: absolute; left: 49px; top: 26px; right: 0; height: 60px; border-radius: 30px 0 0 30px; background: #0f8671; display: flex; padding: 14px 0 0 26px; }
.broken { width: 12px; height: 12px; margin-top: 1px; }
.logo { margin-left: 1px; font-size: 12.500px; line-height: 14px; color: #2270b4; }
.drop { position: absolute; left: 184px; top: 63px; width: 121px; }
.pillbox { width: 115px; height: 20px; border: 1px solid #2087ad; }
.pill { height: 18px; background: #fff; border-radius: 9px; text-align: center; font-size: 12px; line-height: 18px; color: #2383a0; }
.menu { margin: 3px 0 0 2px; width: 119px; height: 53px; background: #fff; box-shadow: 0 2px 6px rgba(0,0,0,.3); border-radius: 0 0 2px 2px; display: flex; align-items: center; padding: 5px 0 0 15px; gap: 13px; font-size: 10.450px; color: #222; white-space: nowrap; }
.form { padding: 69px 0 0 365px; color: #222; }
h1 { margin: 0; font-weight: 300; font-size: 31.650px; line-height: 36px; color: #4c4c4c; }
.grid { display: grid; grid-template-columns: 251px 230px; column-gap: 130px; margin: 58px 0 0 7px; }
label { display: block; height: 81.500px; font-size: 13.600px; line-height: 20px; text-indent: 11px; color: #222; }
label i { display: flex; align-items: center; height: 38px; margin-top: 9px; background: #fff; border-radius: 19px; box-shadow: 0 3px 12px rgba(0,0,0,.12); font-style: normal; font-size: 12px; text-indent: 12px; color: #777; }
.wide { margin-left: 11px; width: 609px; }
.wide .skills { height: 45px; background: #f4f4f4; box-shadow: 0 3px 12px rgba(0,0,0,.09); border-radius: 20px; }
.about { margin-top: 56px; width: 602px; }
.wide .area { height: 60px; border-radius: 5px; }
.sbar { width: 13px; background: #f1f1f1; display: flex; flex-direction: column; align-items: center; padding: 5px 0; }
.sbar svg { width: 6px; height: 4px; }
.thumb { width: 10px; height: 297px; margin-top: 3px; background: #c1c1c1; }
.sbar .dn { margin-top: auto; }
.shot .taskbar { height: 30px; }
.shot .tk { width: 36.300px; border-bottom-width: 1px; padding-top: 1px; }
.shot .tk.w { width: 37px; }
.shot .tk.c { width: 37.500px; padding-right: 1px; }
.shot .tk svg { width: 12px; height: 12px; }
.shot .tk.big svg { width: 18px; height: 18px; }
.shot .tk.run { background-size: 30px 2px; border: 0; padding: 0; }
.shot .tk.hot { background-size: 100% 2px, auto; }
.shot .tray { font-size: 8.900px; padding-right: 19px; }
.shot .tray::after { right: 3px; }
.shot .chev { width: 9px; height: 6px; }
.shot .eng { margin-left: 9px; width: 26px; letter-spacing: -.3px; }
.shot .clock { width: 44px; line-height: 13.500px; letter-spacing: -.2px; }
.shot .notes { margin: 0 0 0 14px; width: 12px; height: 12px; }
.shot .notes svg { width: 12px; height: 12px; }
.shot .notes em { left: 5px; top: 5px; width: 13px; height: 13px; font-size: 8px; line-height: 11px; }
```
